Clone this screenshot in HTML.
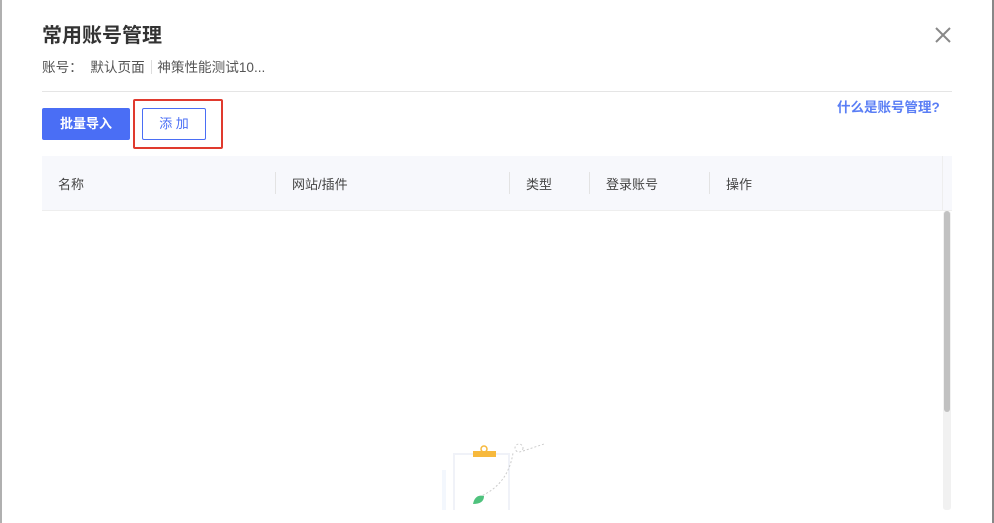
<!DOCTYPE html>
<html><head><meta charset="utf-8"><style>
body{margin:0;width:994px;height:523px;overflow:hidden;background:#fff;position:relative;font-family:"Liberation Sans","Noto Sans CJK SC",sans-serif;}
.a{position:absolute}
</style></head><body>
<div class="a" style="left:0;top:0;width:2px;height:523px;background:#b0b0b0"></div>
<div class="a" style="left:992px;top:0;width:2px;height:523px;background:#888"></div>
<div class="a" style="left:42px;top:19px;font-size:20px;font-weight:bold;color:#333">常用账号管理</div>
<div class="a" style="left:42px;top:56px;font-size:13.6px;color:#555">账号：&nbsp; 默认页面 <span style="display:inline-block;width:1px;height:14px;background:#ddd;vertical-align:-2px;margin:0 2px"></span> 神策性能测试10...</div>
<svg class="a" style="left:935px;top:27px" width="16" height="16"><path d="M1 1L15 15M15 1L1 15" stroke="#888" stroke-width="2"/></svg>
<div class="a" style="left:42px;top:91px;width:910px;height:1px;background:#e5e5e5"></div>
<div class="a" style="left:837px;top:96px;font-size:13.5px;font-weight:bold;color:#5a7ef5">什么是账号管理?</div>
<div class="a" style="left:42px;top:108px;width:88px;height:32px;background:#4a6ef5;border-radius:2px;color:#fff;font-size:13px;font-weight:bold;line-height:32px;text-align:center">批量导入</div>
<div class="a" style="left:142px;top:108px;width:62px;height:30px;border:1px solid #4a6ef5;border-radius:2px;color:#4a6ef5;font-size:13px;line-height:30px;text-align:center">添 加</div>
<div class="a" style="left:133px;top:99px;width:86px;height:46px;border:2px solid #e03a2e;border-radius:2px"></div>
<div class="a" style="left:42px;top:156px;width:910px;height:54px;background:#f7f8fc;border-bottom:1px solid #eee;font-size:13px;color:#444">
<span class="a" style="left:16px;top:18px">名称</span>
<span class="a" style="left:233px;top:16px;width:1px;height:22px;background:#e3e3e3"></span>
<span class="a" style="left:250px;top:18px">网站/插件</span>
<span class="a" style="left:467px;top:16px;width:1px;height:22px;background:#e3e3e3"></span>
<span class="a" style="left:484px;top:18px">类型</span>
<span class="a" style="left:547px;top:16px;width:1px;height:22px;background:#e3e3e3"></span>
<span class="a" style="left:564px;top:18px">登录账号</span>
<span class="a" style="left:667px;top:16px;width:1px;height:22px;background:#e3e3e3"></span>
<span class="a" style="left:684px;top:18px">操作</span>
<span class="a" style="left:900px;top:0;width:1px;height:54px;background:#eee"></span>
</div>
<div class="a" style="left:943px;top:211px;width:8px;height:299px;background:#f1f1f1;border-radius:3px"></div>
<div class="a" style="left:944px;top:211px;width:6px;height:201px;background:#c1c1c1;border-radius:3px"></div>
<svg class="a" style="left:438px;top:440px" width="110" height="70">
<rect x="4" y="30" width="4" height="40" fill="#f3f7fd"/>
<rect x="16" y="14" width="55" height="60" fill="none" stroke="#f0f2f8" stroke-width="2"/>
<rect x="35" y="11" width="23" height="6" fill="#f7b93d"/>
<circle cx="46" cy="9" r="3" fill="none" stroke="#f7b93d" stroke-width="1.5"/>
<path d="M41 57Q70 45 75 13" stroke="#ccc" stroke-dasharray="2 2" fill="none"/>
<circle cx="81" cy="8" r="4" fill="none" stroke="#ccc" stroke-dasharray="2 2"/>
<path d="M85 11L106 4" stroke="#ccc" stroke-dasharray="2 2"/>
<path d="M35 64Q37 54 46 56Q46 64 35 64Z" fill="#4fc27d"/>
</svg>
</body></html>
